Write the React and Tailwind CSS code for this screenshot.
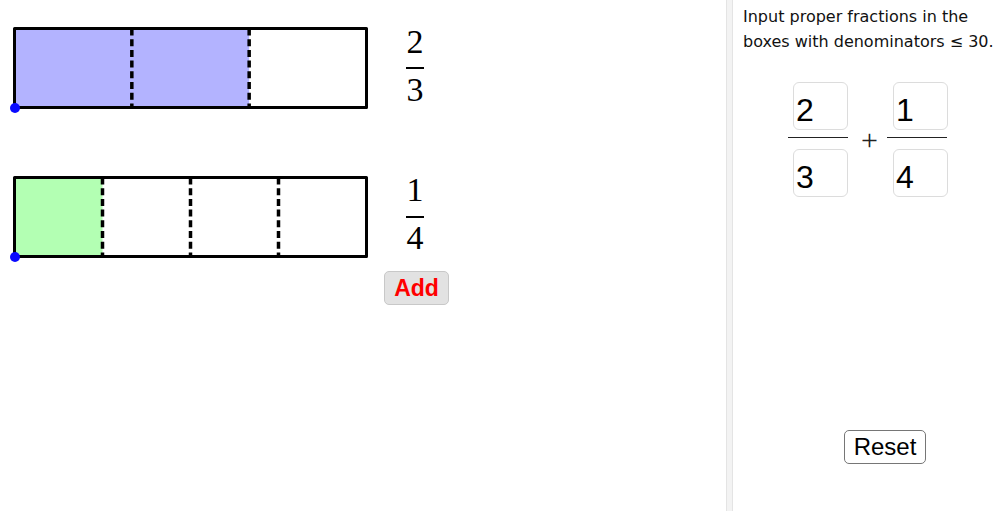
import React from "react";

function Bar({ parts, filled, fill }) {
  const x0 = 14.5;
  const w = 352;
  const y0 = 8.5;
  const h = 79;
  const step = w / parts;
  const divs = [];
  for (let i = 1; i < parts; i++) divs.push(x0 + step * i);
  return (
    <svg width="380" height="95" viewBox="0 0 380 95" className="shrink-0 block">
      <rect x={x0} y={y0} width={step * filled} height={h} fill={fill} />
      {divs.map((x) => (
        <line key={x} x1={x} y1={y0} x2={x} y2={y0 + h} stroke="#000" strokeWidth="3.5" strokeDasharray="7 3.7" />
      ))}
      <rect x={x0} y={y0} width={w} height={h} fill="none" stroke="#000" strokeWidth="3" strokeLinejoin="round" />
      <circle cx="15" cy="88" r="5" fill="#0a0aff" />
    </svg>
  );
}

function Frac({ n, d }) {
  return (
    <div
      className="ml-[23px] mt-[4.5px] flex w-[24px] flex-col items-center text-black"
      style={{ fontFamily: '"Liberation Serif", serif' }}
    >
      <div className="h-[34px] text-[34px] leading-[34px]">{n}</div>
      <div className="mt-[8.5px] h-[2px] w-[18px] bg-black" />
      <div className="mt-[3.5px] h-[34px] text-[34px] leading-[34px]">{d}</div>
    </div>
  );
}

function InputBox({ v, shift }) {
  return (
    <div
      className={
        (shift ? "ml-[6px] " : "ml-[5px] ") +
        "h-[48px] w-[55px] rounded-[6px] border border-[#dcdcdc] bg-white pl-[2px] pt-[11px] text-[32px] leading-[32px] text-black"
      }
      style={{ fontFamily: '"Liberation Sans", Arial, sans-serif' }}
    >
      {v}
    </div>
  );
}

function InputFrac({ n, d, shift }) {
  return (
    <div className="flex w-[61px] flex-col">
      <InputBox v={n} shift={shift} />
      <div className="mt-[7px] h-px w-[60px] bg-[#222]" />
      <div className="mt-[11px]">
        <InputBox v={d} shift={shift} />
      </div>
    </div>
  );
}

export default function App() {
  return (
    <div className="flex h-[513px] w-[1000px] overflow-hidden bg-white">
      <div className="flex w-[726px] shrink-0 flex-col pt-[20px]">
        <div className="flex items-start">
          <Bar parts={3} filled={2} fill="#b3b3ff" />
          <Frac n="2" d="3" />
        </div>
        <div className="mt-[53.5px] flex items-start">
          <Bar parts={4} filled={1} fill="#b3ffb3" />
          <Frac n="1" d="4" />
        </div>
        <button
          className="ml-[384px] mt-[7.5px] flex h-[34px] w-[65px] items-center justify-center rounded-[5px] border border-[#c8c8c8] bg-[#e2e2e2] text-[23px] font-bold text-[#ff0000]"
          style={{ fontFamily: '"Liberation Sans", Arial, sans-serif' }}
        >
          Add
        </button>
      </div>
      <div className="h-[511px] w-[7px] shrink-0 border-x border-[#e4e4e4] bg-[#f3f3f3]" />
      <div className="flex flex-1 flex-col pl-[10px] pt-[4px]">
        <div
          className="h-[51px] text-[16px] leading-[25px] text-[#111]"
          style={{ fontFamily: '"DejaVu Sans", sans-serif' }}
        >
          <div className="whitespace-nowrap">Input proper fractions in the</div>
          <div className="whitespace-nowrap">boxes with denominators ≤ 30.</div>
        </div>
        <div className="ml-[45px] mt-[27px] flex items-center">
          <InputFrac n="2" d="3" />
          <div
            className="ml-[12px] text-[30px] leading-[30px] text-[#222]"
            style={{ fontFamily: '"Liberation Serif", serif' }}
          >
            +
          </div>
          <div className="ml-[9px]">
            <InputFrac n="1" d="4" shift />
          </div>
        </div>
        <button
          className="ml-[101px] mt-[233px] flex h-[34px] w-[82px] items-center justify-center rounded-[5px] border border-[#767676] bg-white text-[24px] text-black"
          style={{ fontFamily: '"Liberation Sans", Arial, sans-serif' }}
        >
          Reset
        </button>
      </div>
    </div>
  );
}
